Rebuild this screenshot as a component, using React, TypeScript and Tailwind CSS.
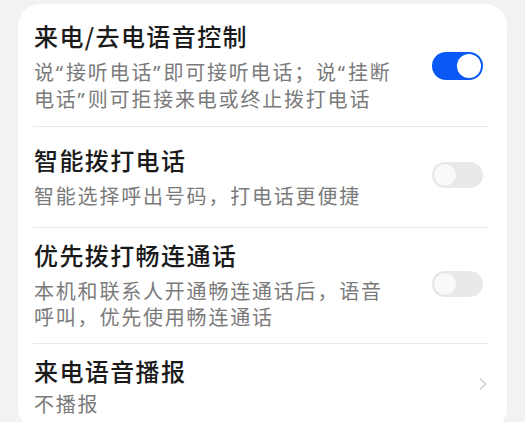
import { ChevronRight } from "lucide-react";

type Item = {
  title: string;
  lines: string[];
  kind: "on" | "off" | "link";
};

const items: Item[] = [
  {
    title: "来电/去电语音控制",
    lines: ["说“接听电话”即可接听电话；说“挂断", "电话”则可拒接来电或终止拨打电话"],
    kind: "on",
  },
  {
    title: "智能拨打电话",
    lines: ["智能选择呼出号码，打电话更便捷"],
    kind: "off",
  },
  {
    title: "优先拨打畅连通话",
    lines: ["本机和联系人开通畅连通话后，语音", "呼叫，优先使用畅连通话"],
    kind: "off",
  },
  {
    title: "来电语音播报",
    lines: ["不播报"],
    kind: "link",
  },
];

// curly quotes look proportional in the reference, not full width
function Line({ text }: { text: string }) {
  const parts = text.split(/([“”])/);
  return (
    <div className="whitespace-nowrap">
      {parts.map((p, i) =>
        p === "“" || p === "”" ? (
          <span key={i} className="font-['Noto_Sans',sans-serif] tracking-[3px]">
            {p}
          </span>
        ) : (
          <span key={i}>{p}</span>
        ),
      )}
    </div>
  );
}

function Toggle({ on }: { on: boolean }) {
  return on ? (
    <div className="relative mr-[6px] mb-1 h-[28px] w-[51px] shrink-0 rounded-full bg-[#0a59f7]">
      <div className="absolute right-[2px] top-[2px] h-[24px] w-[24px] rounded-full bg-white" />
    </div>
  ) : (
    <div className="relative mr-[6px] mb-1 h-[26px] w-[51px] shrink-0 rounded-full bg-[#e9e9ea]">
      <div className="absolute left-[2px] top-[2px] h-[22px] w-[22px] rounded-full bg-[#f9f9f9] shadow-[0_0_2px_rgba(0,0,0,0.08)]" />
    </div>
  );
}

export default function App() {
  return (
    <div className="h-[422px] w-[525px] overflow-hidden bg-[#f1f2f4] px-[18px] pt-[4px] font-['Noto_Sans_CJK_SC','Noto_Sans',sans-serif]">
      <div className="rounded-[22px] bg-white pl-[15px] pr-[18px] pt-[5px]">
        {items.map((item, i) => {
          const last = i === items.length - 1;
          return (
            <div
              key={item.title}
              className={
                last
                  ? "flex items-center justify-between py-[13px]"
                  : "flex min-h-[101px] items-center justify-between border-b border-[#e8e8e8] py-[13px]"
              }
            >
              <div className="ml-[1px]">
                <div className="text-[24px] font-medium leading-[28px] tracking-[1.4px] text-[#1a1a1a]">
                  {item.title}
                </div>
                <div
                  className={
                    last
                      ? "mt-[6px] text-[20px] leading-[26px] tracking-[1.8px] text-[#7b7b7b]"
                      : "mt-[9px] text-[20px] leading-[26px] tracking-[1.8px] text-[#7b7b7b]"
                  }
                >
                  {item.lines.map((line) => (
                    <Line key={line} text={line} />
                  ))}
                </div>
              </div>
              {item.kind === "link" ? (
                <ChevronRight className="-mr-[4px] mb-[6px] h-[20px] w-[20px] shrink-0 text-[#c9c9c9]" strokeWidth={1.5} />
              ) : (
                <Toggle on={item.kind === "on"} />
              )}
            </div>
          );
        })}
      </div>
    </div>
  );
}
